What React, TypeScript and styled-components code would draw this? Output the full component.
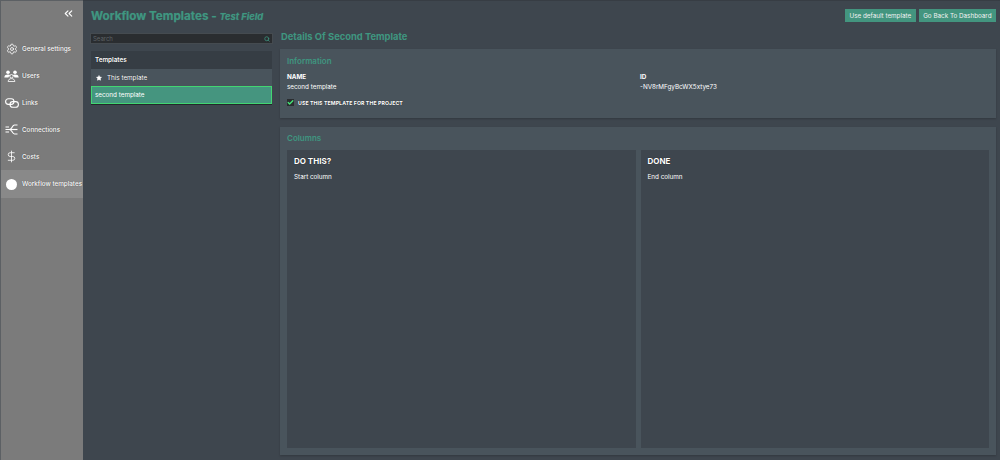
// App.tsx
import React from 'react';
import styled, { createGlobalStyle } from 'styled-components';
import { ChevronsLeft, Settings, DollarSign, Search, Star, Check } from 'lucide-react';

const GlobalStyle = createGlobalStyle`
  html, body {
    margin: 0;
    padding: 0;
    background: #3e464e;
  }
  * {
    box-sizing: border-box;
  }
`;

const UsersIcon = () => (
  <svg width="15" height="12" viewBox="0 0 15 12" fill="#fff">
    <circle cx="4" cy="2.2" r="1.8" />
    <circle cx="11" cy="2.2" r="1.8" />
    <path d="M0.3 7.4C0.5 5.2 2 4.6 4 4.6c1 0 1.8.2 2.4.6C5.3 5.7 4.7 6.4 4.5 7.4z" />
    <path d="M14.7 7.4C14.5 5.2 13 4.6 11 4.6c-1 0-1.8.2-2.4.6 1.1.5 1.7 1.2 1.9 2.2z" />
    <circle cx="7.5" cy="6.2" r="1.7" fill="#7b7b7b" stroke="#fff" strokeWidth="0.9" />
    <path d="M4.2 11.6c.1-2 1.4-3 3.3-3s3.2 1 3.3 3z" fill="#7b7b7b" stroke="#fff" strokeWidth="0.9" />
  </svg>
);

const LinksIcon = () => (
  <svg width="14" height="10" viewBox="0 0 14 10" fill="none" stroke="#fff" strokeWidth="1.1">
    <rect x="0.6" y="0.8" width="8.4" height="5.6" rx="2.8" />
    <rect x="5" y="3.6" width="8.4" height="5.6" rx="2.8" />
  </svg>
);

const ConnectionsIcon = () => (
  <svg width="13" height="11" viewBox="0 0 13 11" fill="none" stroke="#fff" strokeWidth="1.2">
    <path d="M12.5 1H9.5C7.2 1 7 5.5 4.5 5.5H0.5" />
    <path d="M12.5 10H9.5C7.2 10 7 5.5 4.5 5.5" />
    <path d="M4.5 5.5h8" />
    <path d="M0.5 3h3.5M0.5 8h3.5" />
  </svg>
);

const navItems = [
  { label: 'General settings', icon: <Settings size={12} color="#fff" strokeWidth={1.6} /> },
  { label: 'Users', icon: <UsersIcon /> },
  { label: 'Links', icon: <LinksIcon /> },
  { label: 'Connections', icon: <ConnectionsIcon /> },
  { label: 'Costs', icon: <DollarSign size={13} color="#fff" strokeWidth={1.5} /> },
  { label: 'Workflow templates', icon: null, active: true },
];

function App() {
  return (
    <Page>
      <GlobalStyle />
      <Sidebar>
        <Collapse>
          <ChevronsLeft size={13} color="#fff" strokeWidth={2} />
        </Collapse>
        <Nav>
          {navItems.map((item) => (
            <NavItem key={item.label} $active={item.active}>
              <NavIcon>{item.icon ?? <WhiteDot />}</NavIcon>
              {item.label}
            </NavItem>
          ))}
        </Nav>
      </Sidebar>

      <Main>
        <Header>
          <Title>
            Workflow Templates - <em>Test Field</em>
          </Title>
          <HeaderButtons>
            <GreenButton>Use default template</GreenButton>
            <GreenButton>Go Back To Dashboard</GreenButton>
          </HeaderButtons>
        </Header>

        <Content>
          <LeftColumn>
            <SearchBox>
              <span>Search</span>
              <Search size={6} color="#3f9680" strokeWidth={3} />
            </SearchBox>
            <TemplatesHead>Templates</TemplatesHead>
            <TemplateRow>
              <Star size={6} color="#fff" fill="#fff" />
              This template
            </TemplateRow>
            <SelectedRow>second template</SelectedRow>
          </LeftColumn>

          <RightColumn>
            <DetailsTitle>Details Of Second Template</DetailsTitle>
            <InfoPanel>
              <PanelTitle>Information</PanelTitle>
              <InfoGrid>
                <div>
                  <FieldLabel>NAME</FieldLabel>
                  <FieldValue>second template</FieldValue>
                </div>
                <div>
                  <FieldLabel>ID</FieldLabel>
                  <FieldValue>-NV8rMFgyBcWX5xtye73</FieldValue>
                </div>
              </InfoGrid>
              <CheckRow>
                <CheckBox>
                  <Check size={7} color="#46e878" strokeWidth={4.5} />
                </CheckBox>
                USE THIS TEMPLATE FOR THE PROJECT
              </CheckRow>
            </InfoPanel>

            <ColumnsPanel>
              <PanelTitle>Columns</PanelTitle>
              <ColumnsGrid>
                <ColumnCard>
                  <ColumnName>DO THIS?</ColumnName>
                  <ColumnNote>Start column</ColumnNote>
                </ColumnCard>
                <ColumnCard>
                  <ColumnName>DONE</ColumnName>
                  <ColumnNote>End column</ColumnNote>
                </ColumnCard>
              </ColumnsGrid>
            </ColumnsPanel>
          </RightColumn>
        </Content>
      </Main>
    </Page>
  );
}

export default App;

const Page = styled.div`
  display: flex;
  width: 1000px;
  height: 460px;
  overflow: hidden;
  font-family: Inter, 'Liberation Sans', sans-serif;
  background: #3e464e;
  color: #fff;
`;

const Sidebar = styled.div`
  width: 83px;
  flex-shrink: 0;
  background: #7b7b7b;
  border-left: 1px solid #5c6064;
  border-top: 1px solid #5c6064;
`;

const Collapse = styled.div`
  display: flex;
  justify-content: flex-end;
  padding: 6px 8px 0 0;
  height: 34px;
`;

const Nav = styled.div`
  display: flex;
  flex-direction: column;
`;

const NavItem = styled.div<{ $active?: boolean }>`
  display: flex;
  align-items: center;
  height: 27.1px;
  font-size: 6.3px;
  font-weight: 500;
  white-space: nowrap;
  text-shadow: 0 0 1px rgba(0, 0, 0, 0.5);
  background: ${(p) => (p.$active ? '#898989' : 'transparent')};
`;

const NavIcon = styled.div`
  width: 21px;
  flex-shrink: 0;
  display: flex;
  justify-content: center;
  align-items: center;
`;

const WhiteDot = styled.div`
  width: 11px;
  height: 11px;
  border-radius: 50%;
  background: #fff;
`;

const Main = styled.div`
  flex: 1;
  min-width: 0;
  display: flex;
  flex-direction: column;
  padding: 8px 4px 0 8px;
  border-top: 1px solid #373d44;
`;

const Header = styled.div`
  display: flex;
  justify-content: space-between;
  align-items: flex-start;
  height: 24px;
`;

const Title = styled.div`
  font-size: 11.7px;
  font-weight: 700;
  line-height: 15px;
  color: #3f9680;
  text-shadow: 0 0 1px rgba(63, 150, 128, 0.5);

  em {
    font-size: 9.3px;
    font-style: italic;
  }
`;

const HeaderButtons = styled.div`
  display: flex;
  gap: 3px;
`;

const GreenButton = styled.div`
  display: flex;
  align-items: center;
  height: 13px;
  padding: 0 4.5px;
  background: #43957f;
  font-size: 6.3px;
  color: #f2f2f2;
`;

const Content = styled.div`
  flex: 1;
  display: flex;
  gap: 8px;
  min-height: 0;
`;

const LeftColumn = styled.div`
  width: 181px;
  flex-shrink: 0;
  display: flex;
  flex-direction: column;
  padding-top: 1px;
`;

const SearchBox = styled.div`
  display: flex;
  justify-content: space-between;
  align-items: center;
  height: 9px;
  padding: 0 2px;
  margin-bottom: 8px;
  background: #2a2d30;
  outline: 1px solid #454b50;
  font-size: 6px;
  color: #5f6367;
`;

const TemplatesHead = styled.div`
  display: flex;
  align-items: center;
  height: 18px;
  padding-left: 4px;
  background: #363d44;
  font-size: 6.3px;
  font-weight: 600;
  text-shadow: 0 0 1px rgba(0, 0, 0, 0.6);
`;

const TemplateRow = styled.div`
  display: flex;
  align-items: center;
  gap: 5px;
  height: 17px;
  padding-left: 5px;
  background: #49545c;
  font-size: 6.3px;
  text-shadow: 0 0 1px rgba(0, 0, 0, 0.6);
`;

const SelectedRow = styled.div`
  display: flex;
  align-items: center;
  height: 18px;
  padding-left: 3px;
  background: #45957f;
  border: 1px solid #42d672;
  box-shadow: 0 1px 0 #23282c;
  font-size: 6.3px;
`;

const RightColumn = styled.div`
  flex: 1;
  min-width: 0;
  display: flex;
  flex-direction: column;
  margin-top: -2px;
`;

const DetailsTitle = styled.div`
  font-size: 9.4px;
  font-weight: 700;
  line-height: 12px;
  height: 18px;
  padding-left: 1px;
  color: #3f9680;
`;

const InfoPanel = styled.div`
  height: 69px;
  padding: 7px 7px 0;
  margin-bottom: 9px;
  background: #49545c;
  box-shadow: 0 1px 2px rgba(0, 0, 0, 0.2);
`;

const PanelTitle = styled.div`
  font-size: 8px;
  font-weight: 600;
  line-height: 10px;
  color: #3f9680;
`;

const InfoGrid = styled.div`
  display: grid;
  grid-template-columns: 353px 1fr;
  margin-top: 6px;
`;

const FieldLabel = styled.div`
  font-size: 6.3px;
  font-weight: 700;
  line-height: 10px;
`;

const FieldValue = styled.div`
  font-size: 6.3px;
  line-height: 10px;
`;

const CheckRow = styled.div`
  display: flex;
  align-items: center;
  gap: 4px;
  margin-top: 7px;
  font-size: 5.2px;
  font-weight: 700;
  letter-spacing: 0.1px;
  text-shadow: 0 0 1px rgba(0, 0, 0, 0.7);
`;

const CheckBox = styled.div`
  display: flex;
  align-items: center;
  justify-content: center;
  width: 7px;
  height: 7px;
  background: #2a2d30;
`;

const ColumnsPanel = styled.div`
  height: 328px;
  flex-shrink: 0;
  padding: 6px 7px 7px;
  display: flex;
  flex-direction: column;
  background: #49545c;
  box-shadow: 0 1px 2px rgba(0, 0, 0, 0.2);
`;

const ColumnsGrid = styled.div`
  flex: 1;
  display: grid;
  grid-template-columns: 1fr 1fr;
  gap: 5px;
  margin-top: 7px;
`;

const ColumnCard = styled.div`
  padding: 6px 7px;
  background: #3e464e;
`;

const ColumnName = styled.div`
  font-size: 8px;
  font-weight: 700;
  line-height: 10px;
  margin-bottom: 6px;
  text-shadow: 0 0 1px rgba(0, 0, 0, 0.7);
`;

const ColumnNote = styled.div`
  font-size: 6.3px;
  line-height: 10px;
`;
